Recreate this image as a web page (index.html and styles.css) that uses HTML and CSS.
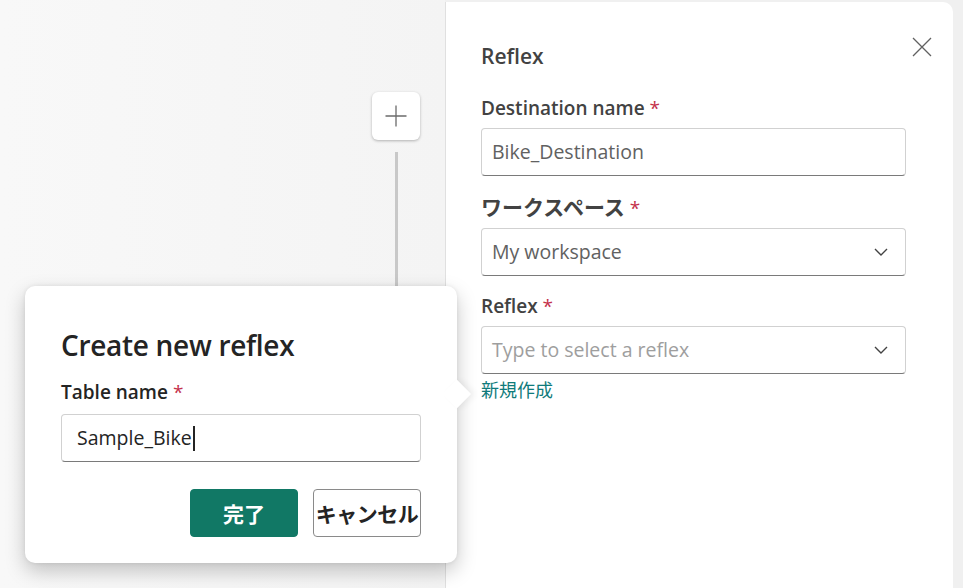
FILE: index.html
```html
<!DOCTYPE html>
<html lang="ja">
  <head>
    <meta charset="UTF-8" />
    <meta name="viewport" content="width=device-width, initial-scale=1.0" />
    <title>Reflex destination</title>
    <link rel="stylesheet" href="styles.css">
  </head>
  <body>
    <div class="layout">
      <div class="canvas">
        <button class="add-node" aria-label="Add">
          <svg width="24" height="24" viewBox="0 0 24 24">
            <path d="M12 1.5v21M1.5 12h21" stroke="#6b6b6b" stroke-width="1.3" fill="none" />
          </svg>
        </button>
        <div class="connector"></div>

        <div class="popover">
          <h2 class="popover-title">Create new reflex</h2>
          <label class="popover-label">Table name <span class="req">*</span></label>
          <div class="text-input popover-input">Sample_Bike<span class="caret"></span></div>
          <div class="popover-actions">
            <button class="btn btn-primary">完了</button>
            <button class="btn btn-secondary">キャンセル</button>
          </div>
        </div>
      </div>

      <div class="panel">
        <button class="close" aria-label="Close">
          <svg width="20" height="20" viewBox="0 0 20 20">
            <path d="M1 1l18 18M19 1L1 19" stroke="#616161" stroke-width="1.3" fill="none" />
          </svg>
        </button>
        <h1 class="panel-title">Reflex</h1>

        <div class="field">
          <label class="field-label">Destination name <span class="req">*</span></label>
          <div class="text-input">Bike_Destination</div>
        </div>

        <div class="field">
          <label class="field-label jp">ワークスペース <span class="req">*</span></label>
          <div class="text-input select">
            <span>My workspace</span>
            <svg width="14" height="8" viewBox="0 0 14 8">
              <path d="M1 1l6 6 6-6" stroke="#424242" stroke-width="1.4" fill="none" />
            </svg>
          </div>
        </div>

        <div class="field">
          <label class="field-label">Reflex <span class="req">*</span></label>
          <div class="text-input select">
            <span class="placeholder">Type to select a reflex</span>
            <svg width="14" height="8" viewBox="0 0 14 8">
              <path d="M1 1l6 6 6-6" stroke="#424242" stroke-width="1.4" fill="none" />
            </svg>
          </div>
          <a class="link" href="#">新規作成</a>
        </div>
      </div>
    </div>
  </body>
</html>
```

FILE: styles.css
```css
* {
  margin: 0;
  padding: 0;
  box-sizing: border-box;
}

body {
  font-family: "Open Sans", "Noto Sans CJK JP", sans-serif;
  background-color: #f0f0f0;
  color: #242424;
  width: 963px;
  height: 588px;
  overflow: hidden;
}

.layout {
  display: flex;
  height: 588px;
}

/* left canvas */
.canvas {
  position: relative;
  width: 445px;
  background: linear-gradient(90deg, #f8f8f8 0%, #f4f4f4 100%);
}

.add-node {
  position: absolute;
  left: 372px;
  top: 92px;
  width: 48px;
  height: 48px;
  border: none;
  border-radius: 6px;
  background-color: #fff;
  box-shadow: 0 1px 3px rgba(0, 0, 0, 0.28);
  display: flex;
  align-items: center;
  justify-content: center;
}

.connector {
  position: absolute;
  left: 395px;
  top: 152px;
  width: 3px;
  height: 200px;
  background-color: #c8c8c8;
}

.popover {
  position: absolute;
  left: 25px;
  top: 286px;
  width: 432px;
  height: 277px;
  background-color: #fff;
  border-radius: 10px;
  box-shadow: 0 8px 20px rgba(0, 0, 0, 0.22), 0 0 4px rgba(0, 0, 0, 0.08);
  padding: 40px 36px 0 36px;
  z-index: 2;
}

.popover::after {
  content: "";
  position: absolute;
  right: -10px;
  top: 98px;
  width: 20px;
  height: 20px;
  background-color: #fff;
  transform: rotate(45deg);
  box-shadow: 3px -3px 6px rgba(0, 0, 0, 0.06);
  z-index: -1;
}

.popover-title {
  font-size: 28px;
  font-weight: 600;
  line-height: 38px;
  letter-spacing: -0.3px;
  color: #242424;
}

.popover-label {
  display: block;
  margin-top: 14px;
  font-size: 19px;
  font-weight: 600;
  line-height: 28px;
  color: #242424;
}

.caret {
  display: inline-block;
  width: 2px;
  height: 25px;
  background-color: #242424;
  vertical-align: middle;
  margin-left: 1px;
}

.popover-actions {
  display: flex;
  justify-content: flex-end;
  gap: 15px;
  margin-top: 27px;
}

.btn {
  width: 108px;
  height: 48px;
  border-radius: 4px;
  font-family: "Noto Sans CJK JP", sans-serif;
  font-size: 21px;
  font-weight: 700;
  white-space: nowrap;
  overflow: hidden;
  display: flex;
  align-items: center;
  justify-content: center;
}

.btn-primary {
  background-color: #117865;
  border: 1px solid #117865;
  color: #fff;
}

.btn-secondary {
  background-color: #fff;
  border: 1px solid #8a8a8a;
  color: #242424;
  letter-spacing: -0.5px;
}

/* right panel */
.panel {
  position: relative;
  width: 508px;
  margin-top: 2px;
  background-color: #fff;
  border-left: 1px solid #e0e0e0;
  border-top-right-radius: 10px;
  padding: 40px 0 0 35px;
}

.close {
  position: absolute;
  right: 21px;
  top: 35px;
  border: none;
  background: none;
}

.panel-title {
  font-size: 21px;
  font-weight: 600;
  line-height: 28px;
  color: #424242;
  margin-bottom: 24px;
}

.field {
  width: 425px;
  margin-bottom: 16px;
}

.field-label {
  display: block;
  font-size: 19px;
  font-weight: 600;
  line-height: 28px;
  color: #424242;
  margin-bottom: 6px;
}

.field-label.jp {
  font-family: "Noto Sans CJK JP", sans-serif;
  font-size: 21px;
  font-weight: 700;
}

.req {
  color: #c4314b;
  font-family: "Open Sans", sans-serif;
  font-size: 19px;
  font-weight: 400;
}

.text-input {
  height: 48px;
  border: 1px solid #d1d1d1;
  border-bottom-color: #7a7a7a;
  border-radius: 4px;
  font-size: 19.5px;
  line-height: 46px;
  color: #616161;
  padding-left: 10px;
  display: flex;
  align-items: center;
}

.popover .popover-input {
  margin-top: 8px;
  padding-left: 15px;
  color: #242424;
}

.select {
  justify-content: space-between;
  padding-right: 17px;
}

.placeholder {
  color: #9e9e9e;
}

.link {
  display: block;
  margin-top: 3px;
  font-family: "Noto Sans CJK JP", sans-serif;
  font-size: 18px;
  line-height: 24px;
  color: #0f7b7b;
  text-decoration: none;
}
```
